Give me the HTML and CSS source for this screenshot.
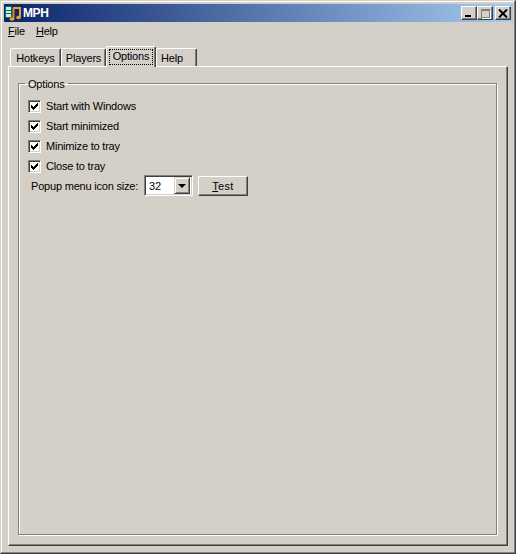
FILE: index.html
```html
<!DOCTYPE html>
<html lang="en">
<head>
    <meta charset="UTF-8">
    <title>MPH</title>
    <link rel="stylesheet" href="styles.css">
</head>
<body>
    <div class="window">
        <div class="titlebar">
            <svg class="app-icon" width="16" height="16" viewBox="0 0 16 16">
                <rect x="0" y="1" width="7" height="12" fill="#0f6a66"/>
                <rect x="1" y="2" width="5" height="3" fill="#c8f0e0"/>
                <rect x="1" y="6" width="5" height="2" fill="#c8f0e0"/>
                <rect x="1" y="9" width="5" height="3" fill="#c8f0e0"/>
                <path d="M8 3H15V12" fill="none" stroke="#f0a020" stroke-width="2"/>
                <path d="M8.5 3V13" fill="none" stroke="#e08a10" stroke-width="2"/>
                <ellipse cx="7" cy="14" rx="2.5" ry="1.8" fill="#f0a020"/>
                <ellipse cx="13.5" cy="12.5" rx="2.3" ry="1.7" fill="#f0a020"/>
            </svg>
            <span class="title">MPH</span>
            <div class="caption-buttons">
                <button class="caption-btn"><span class="icon-min"></span></button>
                <button class="caption-btn"><span class="icon-max"></span></button>
                <button class="caption-btn close">
                    <svg width="10" height="9" viewBox="0 0 10 9"><path d="M1 0.5L9 8.5M9 0.5L1 8.5" stroke="#000" stroke-width="2" fill="none"/></svg>
                </button>
            </div>
        </div>

        <div class="menubar">
            <span class="menu-item"><u>F</u>ile</span>
            <span class="menu-item"><u>H</u>elp</span>
        </div>

        <div class="tabs">
            <div class="tab hotkeys">Hotkeys</div>
            <div class="tab players">Players</div>
            <div class="tab active"><span class="focus">Options</span></div>
            <div class="tab help">Help</div>
        </div>

        <div class="panel">
            <fieldset class="group">
                <legend>Options</legend>
                <label class="check"><span class="box"><svg class="tick" width="7" height="7" viewBox="0 0 7 7"><path d="M0 2h1v1h1v1h1v-1h1v-1h1v-1h1v-1h1v3h-1v1h-1v1h-1v1h-1v1h-1v-1h-1v-1h-1z"/></svg></span>Start with Windows</label>
                <label class="check"><span class="box"><svg class="tick" width="7" height="7" viewBox="0 0 7 7"><path d="M0 2h1v1h1v1h1v-1h1v-1h1v-1h1v-1h1v3h-1v1h-1v1h-1v1h-1v1h-1v-1h-1v-1h-1z"/></svg></span>Start minimized</label>
                <label class="check"><span class="box"><svg class="tick" width="7" height="7" viewBox="0 0 7 7"><path d="M0 2h1v1h1v1h1v-1h1v-1h1v-1h1v-1h1v3h-1v1h-1v1h-1v1h-1v1h-1v-1h-1v-1h-1z"/></svg></span>Minimize to tray</label>
                <label class="check"><span class="box"><svg class="tick" width="7" height="7" viewBox="0 0 7 7"><path d="M0 2h1v1h1v1h1v-1h1v-1h1v-1h1v-1h1v3h-1v1h-1v1h-1v1h-1v1h-1v-1h-1v-1h-1z"/></svg></span>Close to tray</label>
                <div class="popup-row">
                    <span class="popup-label">Popup menu icon size:</span>
                    <div class="combo">
                        <span class="combo-value">32</span>
                        <span class="combo-arrow"><span class="arrow"></span></span>
                    </div>
                    <button class="btn"><u>T</u>est</button>
                </div>
            </fieldset>
        </div>
    </div>
</body>
</html>
```

FILE: styles.css
```css
* {
    box-sizing: border-box;
}

body {
    margin: 0;
    font-family: "Liberation Sans", Arial, sans-serif;
    font-size: 11px;
    letter-spacing: -0.2px;
    color: #000;
    background-color: #d4d0c8;
}

.window {
    width: 516px;
    height: 554px;
    padding: 3px 2px 3px 3px;
    display: flex;
    flex-direction: column;
    background-color: #d4d0c8;
    border: 1px solid;
    border-color: #d4d0c8 #404040 #404040 #d4d0c8;
    box-shadow: inset -1px -1px 0 #808080, inset 1px 1px 0 #fff;
}

/* Barra de titulo */
.titlebar {
    height: 18px;
    flex: none;
    display: flex;
    align-items: center;
    padding: 0 2px 0 1px;
    background: linear-gradient(to right, #0a246a, #a6caf0);
}

.app-icon {
    flex: none;
    margin-right: 2px;
}

.title {
    color: #fff;
    font-weight: bold;
    font-size: 12px;
    letter-spacing: -0.4px;
}

.caption-buttons {
    margin-left: auto;
    display: flex;
}

.caption-btn {
    width: 16px;
    height: 14px;
    padding: 0;
    border: 1px solid;
    border-color: #fff #404040 #404040 #fff;
    box-shadow: inset -1px -1px 0 #808080;
    background-color: #d4d0c8;
    display: flex;
    align-items: center;
    justify-content: center;
}

.caption-btn.close {
    margin-left: 2px;
}

.icon-min {
    width: 6px;
    height: 2px;
    margin-top: 6px;
    margin-right: 2px;
    background-color: #000;
}

.icon-max {
    width: 9px;
    height: 9px;
    border: 1px solid #808080;
    border-top-width: 2px;
    box-shadow: 1px 1px 0 #fff;
}

/* Menu */
.menubar {
    height: 18px;
    flex: none;
    display: flex;
    align-items: center;
    padding-left: 4px;
    gap: 11px;
}

/* Pestanas */
.tabs {
    flex: none;
    height: 26px;
    display: flex;
    align-items: flex-end;
    padding-left: 6px;
}

.tab {
    height: 18px;
    padding-top: 3px;
    text-align: center;
    background-color: #d4d0c8;
    border: 1px solid;
    border-color: #fff #404040 transparent #fff;
    border-bottom: none;
    border-radius: 2px 2px 0 0;
    box-shadow: inset -1px 0 0 #808080;
}

.hotkeys {
    width: 51px;
}

.players {
    width: 45px;
}

.tab.active {
    width: 50px;
    height: 21px;
    padding: 2px 2px 0;
    margin-bottom: -1px;
    position: relative;
    z-index: 1;
}

.help {
    width: 41px;
    padding-left: 4px;
    text-align: left;
}

.focus {
    display: block;
    height: 16px;
    line-height: 15px;
    outline: 1px dotted #000;
    outline-offset: -1px;
}

.panel {
    flex: 1;
    margin: 0 5px 4px 4px;
    padding: 9px 10px 10px 9px;
    display: flex;
    border: 1px solid;
    border-color: #fff #404040 #404040 #fff;
    box-shadow: inset -1px -1px 0 #808080;
}

.group {
    flex: 1;
    margin: 0;
    padding: 6px 9px 0;
    border: 1px solid #808080;
    box-shadow: inset 1px 1px 0 #fff, 1px 1px 0 #fff;
}

.group legend {
    margin-left: -3px;
    padding: 2px 3px 0;
}

.check {
    display: flex;
    align-items: center;
    height: 20px;
}

.box {
    width: 13px;
    height: 13px;
    margin-right: 5px;
    display: flex;
    align-items: center;
    justify-content: center;
    background-color: #fff;
    border: 1px solid;
    border-color: #808080 #fff #fff #808080;
    box-shadow: inset 1px 1px 0 #404040, inset -1px -1px 0 #d4d0c8;
}

.tick {
    fill: #000;
    shape-rendering: crispEdges;
}

.popup-row {
    display: flex;
    align-items: center;
    padding-left: 3px;
    margin-top: -1px;
    height: 21px;
}

.popup-label {
    width: 113px;
}

.combo {
    width: 49px;
    height: 21px;
    display: flex;
    align-items: center;
    padding: 2px;
    background-color: #fff;
    border: 1px solid;
    border-color: #808080 #fff #fff #808080;
    box-shadow: inset 1px 1px 0 #404040, inset -1px -1px 0 #d4d0c8;
}

.combo-value {
    flex: 1;
    padding-left: 2px;
}

.combo-arrow {
    width: 16px;
    height: 17px;
    display: flex;
    align-items: center;
    justify-content: center;
    background-color: #d4d0c8;
    border: 1px solid;
    border-color: #d4d0c8 #404040 #404040 #d4d0c8;
    box-shadow: inset 1px 1px 0 #fff, inset -1px -1px 0 #808080;
}

.arrow {
    width: 0;
    height: 0;
    border-left: 4px solid transparent;
    border-right: 4px solid transparent;
    border-top: 4px solid #000;
}

.btn {
    width: 50px;
    height: 20px;
    margin-left: 5px;
    padding: 0;
    font: inherit;
    letter-spacing: 0.3px;
    background-color: #d4d0c8;
    border: 1px solid;
    border-color: #fff #404040 #404040 #fff;
    box-shadow: inset -1px -1px 0 #808080;
}
```
